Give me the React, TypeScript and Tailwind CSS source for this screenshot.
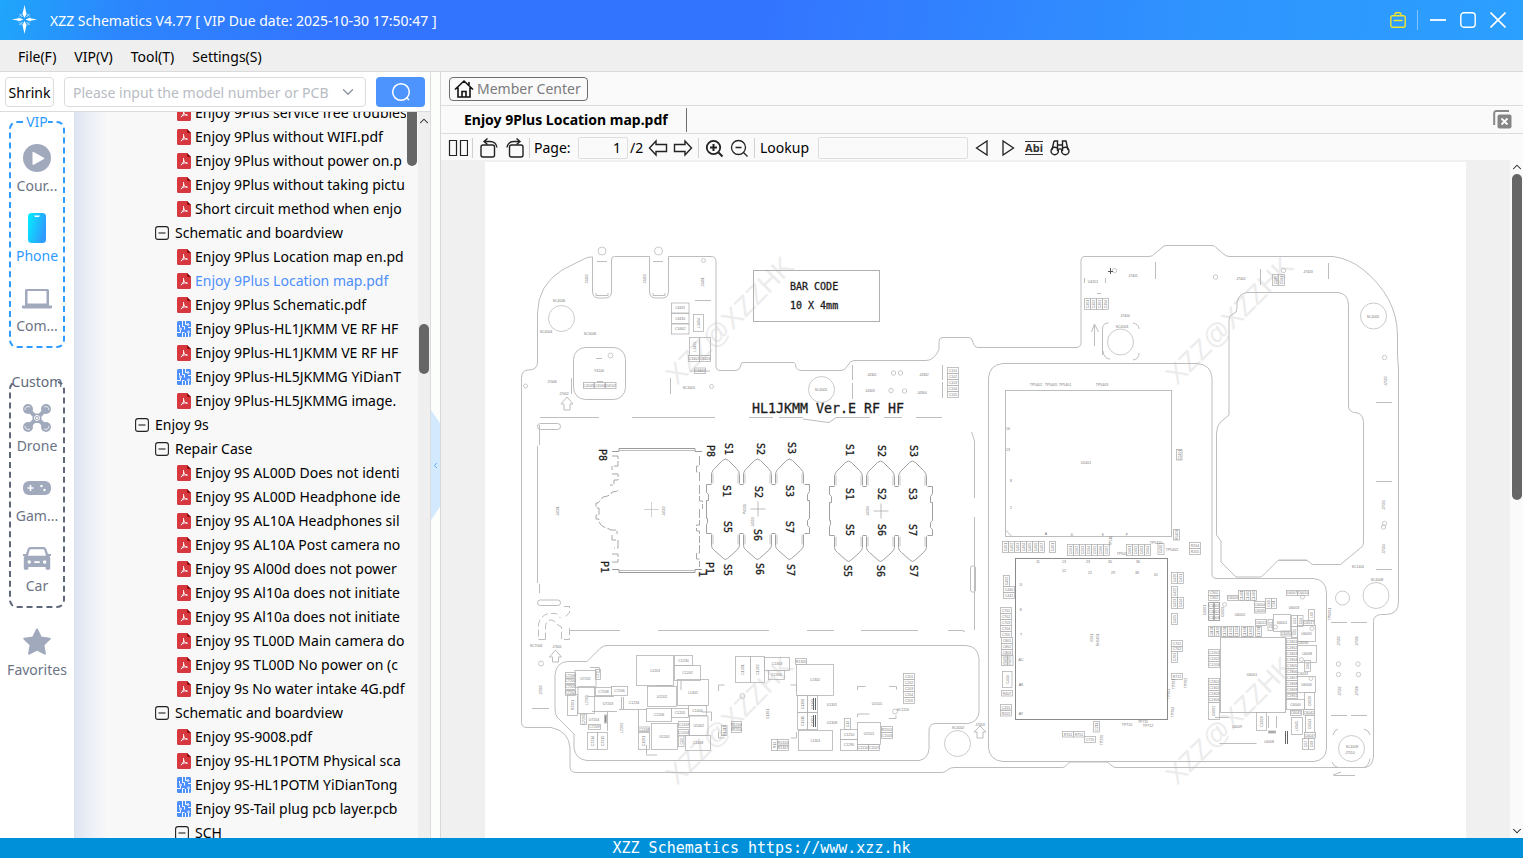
import type { ReactNode } from 'react';
import { ChevronDown, ChevronLeft, ChevronUp } from 'lucide-react';

type TreeKind = 'pdf' | 'pcb' | 'folder1' | 'folder2' | 'folder3';

interface TreeItem {
  kind: TreeKind;
  name: string;
  active?: boolean;
}

const tree: TreeItem[] = [
  { kind: 'pdf', name: 'Enjoy 9Plus service free troubles' },
  { kind: 'pdf', name: 'Enjoy 9Plus without WIFI.pdf' },
  { kind: 'pdf', name: 'Enjoy 9Plus without power on.p' },
  { kind: 'pdf', name: 'Enjoy 9Plus without taking pictu' },
  { kind: 'pdf', name: 'Short circuit method when enjo' },
  { kind: 'folder2', name: 'Schematic and boardview' },
  { kind: 'pdf', name: 'Enjoy 9Plus Location map en.pd' },
  { kind: 'pdf', name: 'Enjoy 9Plus Location map.pdf', active: true },
  { kind: 'pdf', name: 'Enjoy 9Plus Schematic.pdf' },
  { kind: 'pcb', name: 'Enjoy 9Plus-HL1JKMM VE RF HF' },
  { kind: 'pdf', name: 'Enjoy 9Plus-HL1JKMM VE RF HF' },
  { kind: 'pcb', name: 'Enjoy 9Plus-HL5JKMMG YiDianT' },
  { kind: 'pdf', name: 'Enjoy 9Plus-HL5JKMMG image.' },
  { kind: 'folder1', name: 'Enjoy 9s' },
  { kind: 'folder2', name: 'Repair Case' },
  { kind: 'pdf', name: 'Enjoy 9S AL00D Does not identi' },
  { kind: 'pdf', name: 'Enjoy 9S AL00D Headphone ide' },
  { kind: 'pdf', name: 'Enjoy 9S AL10A Headphones sil' },
  { kind: 'pdf', name: 'Enjoy 9S AL10A Post camera no' },
  { kind: 'pdf', name: 'Enjoy 9S Al00d does not power' },
  { kind: 'pdf', name: 'Enjoy 9S Al10a does not initiate' },
  { kind: 'pdf', name: 'Enjoy 9S Al10a does not initiate' },
  { kind: 'pdf', name: 'Enjoy 9S TL00D Main camera do' },
  { kind: 'pdf', name: 'Enjoy 9S TL00D No power on (c' },
  { kind: 'pdf', name: 'Enjoy 9s No water intake 4G.pdf' },
  { kind: 'folder2', name: 'Schematic and boardview' },
  { kind: 'pdf', name: 'Enjoy 9S-9008.pdf' },
  { kind: 'pdf', name: 'Enjoy 9S-HL1POTM Physical sca' },
  { kind: 'pcb', name: 'Enjoy 9S-HL1POTM YiDianTong' },
  { kind: 'pcb', name: 'Enjoy 9S-Tail plug pcb layer.pcb' },
  { kind: 'folder3', name: 'SCH' },
];

const indent: Record<TreeKind, string> = {
  pdf: 'pl-[103px] gap-1',
  pcb: 'pl-[103px] gap-1',
  folder1: 'pl-[61px] gap-1.5',
  folder2: 'pl-[81px] gap-1.5',
  folder3: 'pl-[101px] gap-1.5',
};

const PdfIcon = () => (
  <svg width="14" height="16" viewBox="0 0 14 16" className="shrink-0">
    <path d="M1.500 0H10l4 4v10.500a1.500 1.500 0 0 1-1.500 1.500h-11A1.500 1.500 0 0 1 0 14.500v-13A1.500 1.500 0 0 1 1.500 0Z" fill="#d7373f" />
    <path d="M10 0l4 4h-3.200A.8.8 0 0 1 10 3.200Z" fill="#8f0d12" />
    <path d="M6.600 5.500c.7 2.500-.5 4.700-2.400 6.500M6.800 7.500c.7 1.600 1.800 2.500 3.400 2.800M5 10.700c1.600-.8 3.200-1 5-.7" fill="none" stroke="#fff" strokeWidth="1" strokeLinecap="round" />
  </svg>
);

const PcbIcon = () => (
  <svg width="14" height="16" viewBox="0 0 14 16" className="shrink-0">
    <rect width="14" height="16" rx="1.500" fill="#4d8ffb" />
    <g fill="none" stroke="#fff" strokeWidth="1">
      <path d="M5.500 0v5.500h2v3M8.500 0v3.500h1.500M0 11.500h3.500V9M5.500 16v-4.500h2M8.500 16v-4M11.500 16v-4M14 6.500h-3M2.500 4v2.500" />
      <circle cx="11" cy="3.500" r=".9" />
      <circle cx="3.500" cy="8" r=".9" />
      <circle cx="11.500" cy="11" r=".9" />
    </g>
  </svg>
);

const CollapseIcon = () => (
  <svg width="14" height="14" viewBox="0 0 14 14" className="shrink-0" fill="none" stroke="#222" strokeWidth="1.100">
    <rect x=".6" y=".6" width="12.800" height="12.800" rx="2.400" />
    <path d="M3.500 7h7" />
  </svg>
);

function TreeRow({ item }: { item: TreeItem }) {
  const isFolder = item.kind.startsWith('folder');
  return (
    <li>
      <button className={`flex h-6 w-full items-center whitespace-nowrap text-left ${indent[item.kind]} ${item.active ? 'text-[#4d8ffb]' : 'text-black'}`}>
        {isFolder ? <CollapseIcon /> : item.kind === 'pdf' ? <PdfIcon /> : <PcbIcon />}
        <span>{item.name}</span>
      </button>
    </li>
  );
}

/* ---------- left category bar ---------- */

const PlayIcon = () => (
  <svg width="28" height="28" viewBox="0 0 28 28">
    <circle cx="14" cy="14" r="14" fill="#a1a9bd" />
    <path d="M9.500 8.500v11.500a.8.8 0 0 0 1.200.7l10.200-5.600a.8.8 0 0 0 0-1.400L10.700 7.900a.8.8 0 0 0-1.200.6Z" fill="#fff" />
  </svg>
);

const PhoneIcon = () => (
  <svg width="18" height="30" viewBox="0 0 18 30">
    <defs>
      <linearGradient id="phoneGrad" x1="0" y1="0" x2="1" y2="0.400">
        <stop offset="0%" stopColor="#02efff" />
        <stop offset="100%" stopColor="#2f9bfd" />
      </linearGradient>
    </defs>
    <rect width="18" height="30" rx="3.500" fill="url(#phoneGrad)" />
    <path d="M6 2.500h6l-1 1.500H7Z" fill="#fff" />
  </svg>
);

const ComputerIcon = () => (
  <svg width="30" height="21" viewBox="0 0 30 21">
    <path d="M4.500 1h21A1.500 1.500 0 0 1 27 2.500V18H3V2.500A1.500 1.500 0 0 1 4.500 1Z" fill="#a1a9bd" />
    <rect x="5.500" y="3" width="19" height="12.500" fill="#fff" />
    <path d="M0 17.500h30v1.700a1.300 1.300 0 0 1-1.300 1.300H1.300A1.300 1.300 0 0 1 0 19.200Z" fill="#a1a9bd" />
  </svg>
);

const DroneIcon = () => (
  <svg width="28" height="28" viewBox="0 0 28 28">
    <g fill="#a1a9bd">
      <circle cx="5" cy="5" r="5" />
      <circle cx="23" cy="5" r="5" />
      <circle cx="5" cy="23" r="5" />
      <circle cx="23" cy="23" r="5" />
      <path d="M4.500 7.500 7.500 4.500 12 9.500h4l4.500-5 3 3L18.500 12.500v3l5 5-3 3L16 19h-4l-4.500 4.500-3-3 5-5v-3Z" />
    </g>
    <g fill="none" stroke="#fff">
      <circle cx="14" cy="14" r="2.500" />
      <path d="M2 6a3.300 3.300 0 0 1 5-3M26 6a3.300 3.300 0 0 0-5-3M2 22a3.300 3.300 0 0 0 5 3M26 22a3.300 3.300 0 0 1-5 3" strokeWidth=".8" />
    </g>
    <circle cx="14" cy="14" r="1" fill="#fff" />
  </svg>
);

const GameIcon = () => (
  <svg width="28" height="14" viewBox="0 0 28 14">
    <rect width="28" height="14" rx="6" fill="#a1a9bd" />
    <path d="M4.500 7h6M7.500 4v6" stroke="#fff" strokeWidth="1.600" />
    <circle cx="18.500" cy="5" r="1.200" fill="#fff" />
    <circle cx="21.500" cy="9" r="1.200" fill="#fff" />
  </svg>
);

const CarIcon = () => (
  <svg width="28" height="23" viewBox="0 0 28 23">
    <path d="M7.500 0h13a3 3 0 0 1 2.900 2.200L25 7h3v2h-1.500l.7 1.500V21.500a1.300 1.300 0 0 1-1.300 1.300h-2a1.300 1.300 0 0 1-1.300-1.300V20H5.400v1.500a1.300 1.300 0 0 1-1.300 1.300h-2A1.300 1.300 0 0 1 .8 21.500V10.500L1.500 9H0V7h3l1.600-4.800A3 3 0 0 1 7.500 0Z" fill="#a1a9bd" />
    <path d="M8 2.300h12a1.500 1.500 0 0 1 1.400 1L23 8.700H5l1.600-5.400A1.500 1.500 0 0 1 8 2.300Z" fill="#fff" />
    <circle cx="6.300" cy="15" r="1.700" fill="#fff" />
    <circle cx="21.700" cy="15" r="1.700" fill="#fff" />
    <rect x="11" y="14.200" width="6" height="1.700" rx=".8" fill="#fff" />
  </svg>
);

const StarIcon = () => (
  <svg width="28" height="28" viewBox="0 0 28 28">
    <path d="M14 1.500l4 8.100 8.700 1.200-6.300 6.100 1.500 8.800L14 21.500l-7.900 4.200 1.500-8.800L1.300 10.800 10 9.600Z" fill="#a1a9bd" stroke="#a1a9bd" strokeWidth="2" strokeLinejoin="round" />
  </svg>
);

function NavItem({ icon, label, active }: { icon: ReactNode; label: string; active?: boolean }) {
  return (
    <button className={`flex w-full flex-col items-center gap-0.5 pt-1.5 pb-2.5 leading-5 ${active ? 'text-[#2e9bff]' : 'text-[#6b7385]'}`}>
      <span className="flex h-8 items-center">{icon}</span>
      <span>{label}</span>
    </button>
  );
}

/* ---------- board drawing ---------- */

// x, y, width, height, label, vertical label
type Part = [number, number, number, number, string?, boolean?];

const parts: Part[] = [
  [671.5, 303, 17.5, 10, 'L3431'],
  [671.5, 313.5, 17.5, 10, 'L3430'],
  [671.5, 324, 17.5, 10, 'C3462'],
  [693.5, 314.5, 10, 17, 'L3404', true],
  [689.5, 337.5, 10, 18, 'L3405', true],
  [699.5, 337.5, 11, 18],
  [688.5, 355.5, 11, 6, 'C3402'],
  [699.5, 355.5, 11, 6, 'C3403'],
  [694.5, 368, 11, 5.5, 'C3401'],
  [583.5, 382.5, 10.500, 6, 'C4105'],
  [594.5, 382.5, 10.500, 6, 'C4104'],
  [605.5, 382.5, 10.500, 6, 'D4102'],
  // bottom left shield
  [565.5, 672.5, 10, 5.5, 'C7208'],
  [565.5, 678.5, 10, 5, 'C7204'],
  [565.5, 684.5, 10, 5, 'C7207'],
  [565.5, 690.5, 10, 5, 'C7202'],
  [575, 670.5, 21, 17, 'U7201'],
  [578, 686.500, 16.500, 27, 'L7201', true],
  [595.5, 669.5, 5, 10, 'C72', true],
  [595.5, 687.5, 16, 8, 'C7208'],
  [611.5, 686.5, 16, 9, 'C7206'],
  [567.5, 694.5, 10, 21, 'R7201', true],
  [580.5, 714, 6, 10.5, 'C7205', true],
  [588.5, 724.500, 12, 5, 'C7209'],
  [587.5, 732.5, 10, 17, 'C7214', true],
  [597.5, 732.5, 10, 17, 'C7215', true],
  [636.5, 655.5, 37, 30, 'L1203'],
  [674.5, 655.5, 18, 10, 'C1230'],
  [674.5, 665.5, 26, 15, 'C1202'],
  [677.5, 679.5, 31, 26, 'L1401'],
  [647.5, 686.5, 29, 20, 'U1202'],
  [646.5, 708.5, 25, 13, 'C1206'],
  [671.5, 708.5, 17, 9, 'C1205'],
  [688.5, 705.5, 18, 10, 'C1404'],
  [689.5, 716, 18.5, 19.5, 'U1402'],
  [651.5, 723.5, 26, 26, 'U1201'],
  [638.5, 727, 11, 4.500, 'C1208'],
  [638.5, 732.5, 11, 17, 'C1201', true],
  [678.5, 721.5, 11, 6, 'C1209'],
  [678.5, 729.5, 10.500, 6, 'C1204'],
  [678.5, 736, 5.5, 10.500, 'C12', true],
  [685.5, 735.5, 25, 15, 'C1408'],
  [721.5, 725.5, 5.5, 10, 'R1210', true],
  [731.5, 721.5, 10, 5.5, 'R1206'],
  [731.5, 727.5, 10, 5, 'R1204'],
  [735.5, 656.5, 15, 26, 'C1301', true],
  [750.5, 656.5, 14, 26, 'C1302', true],
  [764.5, 657.5, 25, 13, 'C1303'],
  [768.5, 670.5, 16, 9, 'C1304'],
  [795.5, 658.5, 11, 6, 'R1305'],
  [796.5, 664.5, 37, 31, 'L1302'],
  [797.5, 695.5, 10, 17, 'C1308', true],
  [807.5, 695.5, 10, 17, 'C1309', true],
  [797.5, 712.5, 10, 17, 'C1311', true],
  [807.5, 712.5, 10, 17, 'C1307', true],
  [798.5, 730.5, 34, 20, 'L1301'],
  [771.5, 739.5, 6, 11, 'R13', true],
  [777.5, 739.5, 11, 5.5, 'R1320'],
  [777.5, 745.5, 11, 5, 'R1307'],
  [840.5, 729.5, 17, 10, 'C1250'],
  [840.5, 739.5, 17, 11, 'C1290'],
  [844.5, 718.5, 6, 11, 'C12', true],
  [857.5, 722.5, 23, 22, 'U1501'],
  [857.5, 744.5, 11, 6, 'C1510'],
  [868.5, 744.5, 11, 6, 'C1507'],
  [881.5, 726.5, 11, 6, 'R1501'],
  [881.5, 732.5, 11, 6, 'C1503'],
  // parts round the big chips
  [1176.500, 449.500, 5.500, 10.500, 'C5401', true],
  [1173.500, 529.500, 6, 10.500, 'R5401', true],
  [1049.5, 541.5, 6, 11, 'C401', true],
  [1158, 543.5, 6, 11, 'C430', true],
  [1189.5, 542.5, 11, 6, 'R204'],
  [1189.5, 548.5, 11, 6, 'R205'],
  [1003.5, 575.5, 6, 11, 'C402', true],
  [1003.5, 586.5, 11, 6, 'C440'],
  [1003.5, 592.5, 11, 6, 'C441'],
  [1001.5, 655, 6, 10.500, 'R421', true],
  [1007, 655, 6, 10.500, 'R422', true],
  [1002.500, 671.500, 9.500, 16, 'C434', true],
  [1001.5, 690.5, 11, 5.5, 'R407'],
  [1000.5, 704.5, 11, 5.5, 'C201'],
  [1000.5, 710.5, 11, 5.5, 'R202'],
  [1171.5, 572.5, 6, 11, 'C420', true],
  [1177.5, 572.5, 6, 11, 'C421', true],
  [1171.5, 586.5, 6, 11, 'C422', true],
  [1171.5, 597.5, 6, 11, 'C423', true],
  [1177.5, 597.5, 6, 11, 'C424', true],
  [1171.5, 613.5, 6, 11, 'C425', true],
  [1171.5, 640.5, 11, 6, 'C701'],
  [1171.5, 646.5, 11, 5, 'C702'],
  [1171.5, 651.5, 6, 11, 'C703', true],
  [1171.5, 673.5, 11, 6, 'R712'],
  [1093.5, 721.5, 6, 10.500, 'C711', true],
  [1062.5, 731.5, 11, 5.5, 'R701'],
  [1073.5, 731.5, 11, 5.5, 'R751'],
  [1084.5, 736.5, 11, 6, 'C715'],
  [1272.5, 274.5, 5.5, 11, 'C580', true],
  [1278.5, 274.5, 6, 11, 'C581', true],
  // right cluster
  [1227.5, 595.5, 11, 5, 'C6003'],
  [1254.5, 601.5, 11, 6, 'C6004'],
  [1254.5, 607.5, 11, 5.5, 'C6005'],
  [1265.5, 598.5, 6, 10, 'C60', true],
  [1271.5, 598.5, 5, 10, 'C61', true],
  [1286.5, 590.5, 11, 5, 'L6007'],
  [1297.5, 590.5, 11, 5, 'C6010'],
  [1255.5, 619.5, 11, 6, 'C6012'],
  [1268, 619.5, 4.500, 11, 'C62', true],
  [1273.5, 614.5, 17, 17, 'D6001'],
  [1291.5, 615.5, 6, 11, 'C63', true],
  [1297.5, 615.5, 5.5, 11, 'C64', true],
  [1303.5, 620.5, 11, 5, 'C6017'],
  [1308.5, 609.5, 6, 11, 'L60', true],
  [1291.5, 626.5, 6, 11, 'C65', true],
  [1297.5, 625.5, 18, 16, 'U6005'],
  [1297.5, 645.5, 19, 17, 'L6008'],
  [1297.5, 676.5, 18, 16, 'U6006'],
  [1304.5, 660.5, 6, 11, 'C66', true],
  [1304.5, 692.5, 10, 17, 'C6020', true],
  [1286.5, 699.5, 18, 10, 'C6040'],
  [1290.5, 710.5, 11, 5, 'C6041'],
  [1303.5, 709.5, 11, 5.5, 'C6042'],
  [1305.5, 715.5, 9, 17, 'C6043', true],
  [1291.5, 717.5, 11, 17, 'L6045', true],
  [1256.5, 712.5, 10, 18, 'C6029', true],
  [1304.5, 732.5, 11, 5.5, 'C6047'],
  [1302.5, 738.5, 6, 11, 'C67', true],
  [1308.5, 738.5, 6, 11, 'C68', true],
  [1208.5, 702.5, 11, 17, 'C6002', true],
  [1281, 631, 11, 5, 'C6050'],
];

// runs of equal parts: x, y, width, height, count, direction
type Run = [number, number, number, number, number, 'row' | 'col'];

const runs: Run[] = [
  [947.5, 367.5, 11, 6, 5, 'col'],
  [903.5, 673.5, 11, 6, 5, 'col'],
  [1084.5, 298.5, 6, 11, 4, 'row'],
  [1002.5, 541.5, 6, 11, 7, 'row'],
  [1067.5, 544.5, 6, 11, 7, 'row'],
  [1126.5, 544.5, 6, 11, 4, 'row'],
  [1000.5, 607.5, 11, 6, 5, 'col'],
  [1001.5, 637.5, 11, 6, 3, 'col'],
  [1208.5, 590.5, 11, 5, 2, 'col'],
  [1208.5, 602.5, 11, 6, 3, 'col'],
  [1208.5, 626.5, 6, 10, 2, 'row'],
  [1208.5, 649.500, 11, 6, 3, 'col'],
  [1208.5, 678.500, 11, 6, 4, 'col'],
  [1238.5, 590.5, 6, 10, 3, 'row'],
  [1221.500, 626.5, 6, 10, 3, 'row'],
  [1241.500, 626.5, 6, 10, 2, 'row'],
  [1255.500, 626.5, 6, 10, 1, 'row'],
  [1286.5, 638.5, 11, 6, 9, 'col'],
  [1286.5, 693.500, 11, 5, 1, 'col'],
];

const circles: [number, number, number][] = [
  [561.5, 318.5, 13], [821.5, 389.5, 13], [957.5, 743.5, 13], [1120.5, 342, 13], [1373.5, 316, 13],
  [1376, 595.5, 13], [1351.5, 748.5, 13], [1342.5, 598, 7], [602, 251, 4], [658.5, 251, 4],
  [703.5, 260.5, 2], [525.5, 386, 2], [610.5, 355.5, 2.5], [711.5, 386.5, 2], [893.5, 373, 2.200],
  [900.5, 373, 2.200], [891, 390.500, 2.200], [904.5, 391, 2.200], [541, 663.500, 2.500], [742.5, 696, 2.500],
  [895, 711.500, 2.500], [1114.5, 270.500, 2.200], [1215.5, 277, 2.200], [1283.500, 270.500, 2.200], [1384.500, 357.500, 2.200],
  [1384.500, 523.500, 2.200], [1383.500, 527, 2.200], [1338.5, 664, 2.200], [1358, 664, 2.200], [1338.5, 674.500, 2.200],
  [1358.500, 674.500, 2.200], [1224.500, 604.500, 2], [1302.500, 597, 2], [1275.500, 627, 2], [1312, 628.500, 2],
  [1301.500, 659.500, 2], [1311, 678.500, 2],
];

// loose reference names: x, y, text, vertical
const labels: [number, number, string, boolean?][] = [
  [559, 301, 'SC4006'], [546, 332, 'SC4004'], [590, 334, 'SC3006'], [587, 279, 'J3402', true], [645, 279, 'J3403', true],
  [703, 282, 'J3401', true], [599, 371, 'Y4100'], [552, 382, 'J7006'], [564, 394, 'J7002'], [689, 388, 'SC3401'],
  [821, 390, 'SC4001'], [872, 375, 'J4301'], [924, 375, 'J4302'], [870, 391, 'J4303'], [922, 393, 'J4304'],
  [558, 511, 'J4501', true], [664, 511, 'J4502', true], [745, 509, 'P4501', true], [753, 522, 'J4503', true], [868, 511, 'J4504', true],
  [536, 646, 'SC7004'], [557, 647, 'J7001'], [541, 690, 'J7005', true], [594, 720, 'U7204'], [608, 704, 'U7203'],
  [622, 728, 'L7203', true], [634, 703, 'C1234'], [768, 714, 'U1301', true], [832, 705, 'U1301'], [832, 723, 'U1308'],
  [877, 704, 'U1501'], [903, 710, 'SC1201'], [958, 728, 'SC4002'], [980, 725, 'J7003'], [1086, 463, 'U5401'],
  [1036, 385, 'TP5402'], [1051, 385, 'TP5405'], [1065, 385, 'TP5401'], [1102, 385, 'TP5403'], [1093, 282, 'U4201'],
  [1133, 276, 'J7401'], [1241, 279, 'J7402'], [1308, 272, 'J7403'], [1125, 316, 'J7404'], [1122, 327, 'SC4003'],
  [1373, 317, 'SC4005'], [1386, 381, 'J7502', true], [1384, 505, 'J7503', true], [1384, 549, 'J7504', true], [1358, 567, 'SC1401'],
  [1377, 580, 'SC4008'], [1352, 747, 'SC4009'], [1350, 753, 'J7510'], [1339, 641, 'J7505', true], [1357, 641, 'J7506', true],
  [1340, 691, 'J7507', true], [1357, 691, 'J7508', true], [1330, 614, 'TP6001', true], [1092, 638, 'U501', true], [1098, 640, 'SH0401', true],
  [1240, 615, 'U6002'], [1252, 675, 'U6001'], [1294, 608, 'U6003'], [1237, 727, 'L6009'], [1269, 742, 'L6008'],
  [1156, 543, 'TP5410'], [1172, 550, 'TP5402'], [1122, 554, 'TP501'], [1111, 541, 'TP511', true], [1174, 684, 'TP701', true],
  [1186, 683, 'TP702', true], [1169, 694, 'TP703', true], [1173, 712, 'TP704', true], [1127, 725, 'TP710'], [1143, 722, 'TP711'],
  [1148, 726, 'TP712'], [1102, 740, 'TP720', true], [1303, 643, 'C6030'], [1303, 674, 'C6031'],
  [1205, 610, 'C6001', true], [1223, 612, 'C6009', true], [1046, 534, 'A'], [1072, 535, 'D'], [1103, 535, 'K'],
  [1127, 535, 'P'], [1008, 429, '16'], [1008, 450, '13'], [1011, 481, '8'], [1011, 508, '2'],
  [1038, 562, '11'], [1064, 562, '13'], [1088, 562, '23'], [1110, 562, '30'], [1138, 562, '36'],
  [1064, 571, '12'], [1090, 573, '22'], [1113, 573, '29'], [1137, 573, '38'], [1156, 575, '41'],
  [1021, 585, 'D'], [1021, 610, 'K'], [1021, 635, 'T'], [1021, 660, 'AC'], [1021, 685, 'AK'], [1021, 714, 'AY'],
];

const silkscreen: [number, number, string][] = [
  [599, 455, 'P8'], [707, 451, 'P8'], [601, 567, 'P1'], [706, 568, 'P1'], [699, 574, '1'],
  [725, 449, 'S1'], [757, 449, 'S2'], [788, 448, 'S3'], [723, 491, 'S1'], [755, 492, 'S2'], [786, 491, 'S3'],
  [724, 527, 'S5'], [754, 535, 'S6'], [786, 527, 'S7'], [724, 570, 'S5'], [756, 569, 'S6'], [787, 570, 'S7'],
  [846, 450, 'S1'], [878, 451, 'S2'], [910, 451, 'S3'], [846, 494, 'S1'], [878, 494, 'S2'], [909, 494, 'S3'],
  [846, 530, 'S5'], [878, 530, 'S6'], [909, 530, 'S7'], [844, 571, 'S5'], [877, 571, 'S6'], [910, 571, 'S7'],
];

const watermarks = [[729, 320], [1229, 320], [729, 720], [1229, 720]];

function PartBox({ part }: { part: Part }) {
  const [x, y, w, h, label, vertical] = part;
  const cx = x + w / 2;
  const cy = y + h / 2;
  return (
    <g>
      <rect x={x} y={y} width={w} height={h} fill="none" stroke="#b4b4b4" strokeWidth=".8" />
      {label && (
        <text x={cx} y={cy + 1.3} textAnchor="middle" transform={vertical ? `rotate(-90 ${cx} ${cy})` : undefined}>
          {label}
        </text>
      )}
    </g>
  );
}

// one spring contact group: three pointed pads with stepped outer edges
function ContactGroup({ x, y }: { x: number; y: number }) {
  return (
    <g transform={`translate(${x} ${y})`}>
      {[0, 32, 64].map((dx) => (
        <g key={dx}>
          <path d={`M${dx + 5} 25V15q1-3 3-5l8-8q3-3 6 0l8 8q3 3 3 6v9`} />
          <path d={`M${dx + 5} 76v11q0 3 3 5l9 8q2 2 4 0l9-8q3-3 3-5V76`} />
          <path d={`M${dx + 6.500} 76v10M${dx + 31.500} 76v10M${dx + 6.500} 15v10M${dx + 31.500} 15v10`} strokeWidth=".6" />
        </g>
      ))}
      <path d="M5 26H0v8l2 2v6h-2v18h1v4l-1 2v9h5M98 26h5v7l-2 3v6h2v18l-2 2v5l2 2v6h-5M33 26h4M65 26h4M33 75h4M65 75h4" />
      <path d="M44 50.500h15M51.500 43v15" strokeWidth=".7" />
    </g>
  );
}

function BoardDrawing() {
  return (
    <svg viewBox="485 162 981 676" className="block w-full bg-white">
      <g fontFamily="'Liberation Sans', Arial, sans-serif" fontSize="27" fill="#ececed">
        {watermarks.map(([x, y]) => (
          <text key={`${x}-${y}`} x={x} y={y + 10} textAnchor="middle" transform={`rotate(-45 ${x} ${y})`}>XZZ@XZZHK</text>
        ))}
      </g>

      <g fill="none" stroke="#bdbdbd" strokeWidth="1">
        {/* board edge */}
        <path d="M521.500 378q0-8 7-8q9 0 9-8V313Q538 285 562 270L585 258.500q4-2 7.500-1.500V291q0 7 6 7h7q6 0 6-7V260q0-3.500 3-3.500H649.500V291q0 7 6 7h7q6 0 6-7V256.500H711q5 0 5 5V366q0 4.500 4 4.500h15q5 0 6-6q0-2 2-2h51q2 1 2 5q2 3 5 3h40q4 0 6-4q3-6 7-6H926q8 0 13-11v-8q0-4 4-4h26q3 0 4 5q1 5 6 5h97q5 0 5-5V261q0-4.500 4-4.500h64q4 0 6-3l7-6q2-2 4-2h46q3 0 4 2l7 6q3 3 6 3h104q16 2 30 13Q1397 297 1397.500 335V355l1 15V602q0 12-12 12.500h-6q-7 1-7 7V756q-1 11-9 11.500H1116q-2 0-3-1l-4-3q-1-1.500-3-1.500h-35q-2 0-3 1.500l-3 3q-1 1-3 1H954q-3 0-6 2q-3 3-6 3H576q-6 0-6-6V748q-1-17-19-20.500H527q-5.500 0-5.500-5Z" />
        {/* shields */}
        <path d="M555 675q1-13 13-13.500h19l13-13q3-3 7-3H966q12 1 13 13V712q-1 10-11 11.500H936q-7 0-7 7V749q-1 10-10 11.500H587q-11-1-13-12V734L557 717q-2-3-2-8Z" />
        <path d="M988.500 378q1-13 14-14.500H1197q14 1 15 14.500V574q0 4.500 5 4.500h96q13 1 13.500 14V749q-1 11-12.500 12.500H1003q-13-1-14.500-13.500Z" />
        <path d="M1248 292.500h90q10 1 10.500 12V407q1 5 6 5.500q8 0 9 9V543q0 3-3 5l-20 16.500h-28l-6-4.500h-28l-15 15q-2 2-4 2H1236l-15-15V541l-4.500-6V434q0-8 4-12l8.500-7V320q0-5 4-6q4-1 4-6v-6q2-9 11-9.500Z" />
        <rect x="573.5" y="347.5" width="52" height="52" rx="12" />
        <rect x="1005.5" y="390.5" width="166" height="146" />
        <rect x="1220.5" y="637.5" width="65" height="75" />
        <rect x="753.5" y="270.5" width="126" height="51" stroke="#b0b0b0" />
        <rect x="1015.5" y="558.5" width="152" height="161" stroke="#8a8a8a" />
        {circles.map(([cx, cy, r]) => (
          <circle key={`${cx}-${cy}`} cx={cx} cy={cy} r={r} strokeWidth=".8" />
        ))}
        {/* slot feet, short marks */}
        <path d="M596 293v2.500h12V293M653 293v2.500h12V293M597 261.500h10M653 261.500h10M695 300.500h16M596 358.500h6M597 381.500h6M571.500 378v16M670.500 378v16M852.500 365v15M852.500 383v16M942.500 365v15M942.500 382v16M690 371h20" />
        {/* inner partition of the left half */}
        <path d="M540 417.500h59M632 417.500h83M749 417.500h24M779 417.500h24M803 419l18 2.500l8 1l7-5h34M884 417.500h18M916 417.500h26M971.500 432q3 8 3 10v56M974.500 517v105M539.500 425v20M537.500 446v137M539.500 584v9M570 630.500h50M658 630.500h111M807 630.500h27M861 630.500h57M948 630.500h14l3 1M974.500 622v8" />
        <rect x="537.5" y="423.500" width="23" height="6" rx="3" />
        <rect x="537.5" y="600" width="23" height="5.500" rx="2.700" />
        <rect x="970.500" y="566" width="5" height="26" rx="2" />
        <path d="M545.500 639.500h-7V625q1-9 10-11.500h8l4 4.500M545.500 639.500V626q1-6 6-6q4 1 5 4l5 3v12.500h8V628M564 606.500h5.500v6l-6 6" strokeDasharray="7 3" />
        {/* arrows */}
        <path d="M567 397l-6 7h3v6h6v-6h3ZM555.500 650l-6 7h3v5h6v-5h3ZM980 726l-6 6h3v6h6v-6h3ZM1094.500 346V324M1094.500 324l-3 8M1094.500 324l4 8M1334 775.500h21M1333 775l8-3" />
        {/* connector */}
        <path d="M619 448.500h76v3h7M619 448.500v3h-7M619 572.500h76v-3h7M619 572.500v-3h-7" stroke="#9a9a9a" />
        <path d="M619 450.500h76M619 570.500h76" />
        <path d="M612 456h6v10h-6v4M612 474h6v6h-4v5h-4M618 490q0 2-6 2q-1 4-9 5q-4 5-5 6h-2v5h3v7h-3v4h3v3q2 5 8 6l4 2h6v4M612 535v5h6v8h-4M612 554h6v8h-6M699.500 456v10h-3v6h3v10M699.500 485v16h3v8M699.500 509v16h-3v6h3v12M699.500 545v8h-3v6h3v8" stroke="#a8a8a8" strokeDasharray="9 2" />
        <path d="M644 509.500h15M651.500 502v15" strokeWidth=".7" />
        <g stroke="#a0a0a0">
          <ContactGroup x={706.5} y={458.5} />
          <ContactGroup x={829.5} y={460.5} />
        </g>
        {/* marks on the upper right */}
        <path d="M1084.500 278v5M1105.500 278v5M1155.500 262v17M1260.500 269v16M1328.500 263v16M1376 402.500h16M1376 481.500h16M1097 293.500h4M1102.500 355V329q0-6 6-6M1103 351q1 8 7 8M1133 323q6 1 6 6M1139 353q0 6-6 7M1376 569.500h16M1331 622.500h16M1351 622.500h16M1331 715.500h16M1351 715.500h16M1279 560.500h28M1333 735q1-5 5-6M1364 729q5 1 6 6M1332 762q2 5 6 5.500h26q5-2 6-9M1005.500 530l6 6" />
        <path d="M1108 271.500h5M1110.500 268v6" stroke="#555" />
        {/* chip corner brackets */}
        <path d="M718.500 691v-6h6M718.500 732v6h6M796.500 691v-6h-6M796.500 732v6h-6M857.500 690v-3.500h8M889 686.500h7.500v3M857.500 717v-3h12M889 718.500h7v-3M590 667.500h9.500v5M588 696.500h26M592 711.500h25M621.500 697v12M623.500 697v12M607.500 711v20M638.500 710v17M619 709.500h28M646 755h11M646.500 745v9M657 685.500h14M681 681v9M702 712h9.500v9M532 708.500h17M1219.500 743.500h37M1276.500 716v12M1268.500 716v12M1215 717.500h14" />
        <path d="M813.500 698v12M815.500 698v12M813.500 715v12M815.500 715v12M1285.500 731v13M1287.500 731v13" stroke="#666" />
        <rect x="604.500" y="715" width="2" height="8" fill="#888" />
        <rect x="1268.500" y="731" width="7" height="2" fill="#999" />
        <path d="M1208.500 602.500h11v18h-11ZM1214 602.500v18" stroke="#777" />
      </g>

      <g fontFamily="'Liberation Sans', Arial, sans-serif" fontSize="3.500" fill="#777">
        {parts.map((p, i) => <PartBox key={i} part={p} />)}
        {runs.flatMap(([x, y, w, h, count, dir], r) =>
          Array.from({ length: count }, (_, i) => (
            <PartBox
              key={`${r}-${i}`}
              part={[dir === 'row' ? x + i * w : x, dir === 'col' ? y + i * h : y, w, h, `C${r + 1}0${i + 1}`, dir === 'row']}
            />
          ))
        )}
        {labels.map(([x, y, text, vertical]) => (
          <text key={`${x}-${y}`} x={x} y={y + 1} textAnchor="middle" transform={vertical ? `rotate(-90 ${x} ${y})` : undefined}>{text}</text>
        ))}
      </g>

      <g fontFamily="'DejaVu Sans Mono', monospace" fill="#1c1c1c" stroke="#1c1c1c" strokeWidth=".3">
        <g fontSize="10">
          <text x="790" y="290">BAR CODE</text>
          <text x="790" y="309">10 X 4mm</text>
          {silkscreen.map(([x, y, text]) => (
            <text key={`${x}-${y}`} x={x} y={y} textAnchor="middle" transform={`rotate(90 ${x} ${y})`}>{text}</text>
          ))}
        </g>
        <text x="752" y="413" fontSize="13.300">HL1JKMM Ver.E RF HF</text>
      </g>
    </svg>
  );
}

/* ---------- toolbar ---------- */

function ToolButton({ label, children }: { label: string; children: ReactNode }) {
  return (
    <button aria-label={label} className="flex h-6 w-5 shrink-0 items-center justify-center">
      <svg width="20" height="20" viewBox="0 0 20 20" fill="none" stroke="#222" strokeWidth="1.400">{children}</svg>
    </button>
  );
}

const Separator = () => <span className="h-5 w-px shrink-0 bg-[#d0d0d0]" />;

function Toolbar() {
  return (
    <div className="flex h-[26px] shrink-0 items-center pt-px pl-[7px] text-black">
      <ToolButton label="Two pages">
        <path d="M1.500 2.500h7v15h-7ZM12.500 2.500h7v15h-7Z" strokeWidth="1.200" />
      </ToolButton>
      <div className="ml-1 flex items-center gap-1.5">
        <Separator />
        <ToolButton label="Rotate left">
          <rect x="2" y="7" width="13.500" height="12" rx="2" />
          <path d="M5 3.500h6q6 0 7 6M8.500.5 5 3.500 8.500 6.500" />
        </ToolButton>
        <ToolButton label="Rotate right">
          <rect x="4.500" y="7" width="13.500" height="12" rx="2" />
          <path d="M15 3.500H9q-6 0-7 6M11.500.5 15 3.500 11.500 6.500" />
        </ToolButton>
      </div>
      <label htmlFor="page" className="ml-1 w-[49px] border-l border-[#d0d0d0] pl-1">Page:</label>
      <input id="page" defaultValue="1" className="h-[22px] w-[50px] rounded-xs border border-[#dedede] bg-[#fafafa] pr-1.5 text-right" />
      <span className="ml-0.5 w-[18px]">/2</span>
      <div className="flex items-center gap-[5px]">
        <ToolButton label="Previous page"><path d="M1.500 10 8 3v3.500h10.500v7H8V17Z" /></ToolButton>
        <ToolButton label="Next page"><path d="M18.500 10 12 3v3.500H1.500v7H12V17Z" /></ToolButton>
        <Separator />
        <ToolButton label="Zoom in"><circle cx="9.500" cy="9.500" r="6.700" strokeWidth="1.800" /><path d="M14.500 14.500l4 4M6 9.500h7M9.500 6v7" strokeWidth="2" /></ToolButton>
        <ToolButton label="Zoom out"><circle cx="9.500" cy="9.500" r="7" strokeWidth="1.300" /><path d="M14.500 14.500l4 4M6.500 9.500h6" strokeWidth="1.300" /></ToolButton>
        <Separator />
      </div>
      <label htmlFor="lookup" className="ml-[5px] w-[58px]">Lookup</label>
      <input id="lookup" className="h-[22px] w-[150px] rounded-xs border border-[#dedede] bg-[#fafafa] px-1.5" />
      <div className="ml-1 flex items-center gap-1.5">
        <ToolButton label="Find previous"><path d="M15 3v14L4.500 10Z" strokeWidth="1.300" /></ToolButton>
        <ToolButton label="Find next"><path d="M5 3v14l10.500-7Z" strokeWidth="1.300" /></ToolButton>
        <button className="flex w-5 shrink-0 flex-col items-center text-[11px] leading-3 font-bold text-[#333]">
          <span className="border-y border-[#333]">Abi</span>
        </button>
        <ToolButton label="Whole word">
          <path d="M4 3h3.500v4h5V3H16l2 9M4 3 2 12M7.500 7v6M12.500 7v6" />
          <circle cx="4.700" cy="13" r="3.700" />
          <circle cx="15.300" cy="13" r="3.700" />
          <path d="M8.500 11h3" />
        </ToolButton>
      </div>
    </div>
  );
}

function TitleBar() {
  return (
    <header className="flex h-10 shrink-0 items-center bg-[linear-gradient(100deg,#1fa6fb_0%,#2c86fd_8%,#3374ff_22%,#3374ff_50%,#2f93fe_78%,#2ba0ff_100%)] pr-[17px] pl-3 text-white">
      <svg width="25" height="30" viewBox="0 0 25 30" fill="#fff">
        <path d="M12.500 0 14.500 9 12.500 13 10.500 9ZM12.500 29l2-9-2-4-2 4ZM0 14.500 8 13l3.500 1.500L8 16ZM25 14.500 17 13l-3.500 1.500L17 16Z" />
        <path d="M7.500 9l3 3M17.500 9l-3 3M7.500 20l3-3M17.500 20l-3-3" stroke="#fff" strokeWidth="1" opacity=".8" />
        <circle cx="12.500" cy="14.500" r="6" fill="none" stroke="#fff" opacity=".3" />
      </svg>
      <h1 className="ml-[13px] flex-1 pt-0.5 whitespace-nowrap">XZZ Schematics V4.77 [ VIP Due date: 2025-10-30 17:50:47 ]</h1>
      <button aria-label="Toolbox" className="text-[#efe52c]">
        <svg width="16" height="16" viewBox="0 0 16 16" fill="none" stroke="currentColor" strokeWidth="1.400">
          <rect x=".8" y="3.800" width="14.400" height="11.400" rx="1.800" />
          <path d="M5 3.500V2.200A1.400 1.400 0 0 1 6.400.8h3.200A1.400 1.400 0 0 1 11 2.200v1.300M3.500 8.500h9" />
        </svg>
      </button>
      <span className="mr-3 ml-[11px] h-5 w-px bg-white/40" />
      <div className="flex items-center gap-3.5">
        <button aria-label="Minimize">
          <svg width="16" height="16" viewBox="0 0 16 16" fill="none" stroke="#fff" strokeWidth="1.800"><path d="M0 8h16" /></svg>
        </button>
        <button aria-label="Maximize">
          <svg width="16" height="16" viewBox="0 0 16 16" fill="none" stroke="#fff" strokeWidth="1.400"><rect x=".8" y=".8" width="14.400" height="14.400" rx="3" /></svg>
        </button>
        <button aria-label="Close">
          <svg width="16" height="16" viewBox="0 0 16 16" fill="none" stroke="#fff" strokeWidth="1.600"><path d="M.5.5l15 15M15.500.5l-15 15" /></svg>
        </button>
      </div>
    </header>
  );
}

function SidePanel() {
  return (
    <aside className="flex w-[431px] shrink-0 flex-col border-r border-[#dcdcdc] bg-white">
      <div className="flex h-10 shrink-0 items-center border-b border-[#dcdcdc] px-[5px] pt-px">
        <button className="h-[30px] w-[49px] shrink-0 rounded border border-[#dcdcdc] pt-px text-black">
          <span className="-mx-1">Shrink</span>
        </button>
        <div className="ml-2.5 flex h-[30px] min-w-0 flex-1 items-center rounded border border-[#dcdcdc] pr-2 pl-2">
          <input aria-label="Model number" placeholder="Please input the model number or PCB" className="min-w-0 flex-1 pt-px outline-none placeholder:text-[#b8bcc4]" />
          <button aria-label="Open list"><ChevronDown size={18} color="#8f959f" strokeWidth={1.8} /></button>
        </div>
        <button aria-label="Search" className="ml-2.5 flex h-[30px] w-[49px] shrink-0 items-center justify-center rounded-sm bg-[#4d94ff]">
          <svg width="20" height="20" viewBox="0 0 20 20" fill="none" stroke="#fff" strokeWidth="1.500"><circle cx="10" cy="10" r="8.300" /><path d="M15.500 15.500l2.500 2.500" /></svg>
        </button>
      </div>
      <div className="flex min-h-0 flex-1">
        <nav className="flex w-[74px] shrink-0 flex-col items-center">
          <fieldset className="w-14 min-w-0 rounded-lg border-2 border-dashed border-[#2e9bff] pt-1">
            <legend className="mx-auto leading-5 text-[#2e9bff]">VIP</legend>
            <NavItem icon={<PlayIcon />} label="Cour..." />
            <NavItem icon={<PhoneIcon />} label="Phone" active />
            <NavItem icon={<ComputerIcon />} label="Com..." />
          </fieldset>
          <fieldset className="mt-6 w-14 min-w-0 rounded-lg border-2 border-dashed border-[#5f687b] pt-1">
            <legend className="mx-auto leading-5 text-[#5f687b]"><span className="-mx-1">Custom</span></legend>
            <NavItem icon={<DroneIcon />} label="Drone" />
            <NavItem icon={<GameIcon />} label="Gam..." />
            <NavItem icon={<CarIcon />} label="Car" />
          </fieldset>
          <div className="mt-3"><NavItem icon={<StarIcon />} label="Favorites" /></div>
        </nav>
        <div className="flex min-w-0 flex-1 bg-[linear-gradient(90deg,#dbe3f1_0px,#e9edf5_12px,#f8f8f8_34px)]">
          <div className="min-w-0 flex-1 overflow-hidden">
            <ul className="-mt-[11px]">
              {tree.map((item, i) => <TreeRow key={i} item={item} />)}
            </ul>
          </div>
          <div className="w-3 pl-px"><div className="h-[54px] w-2.5 rounded-b-full bg-[#666]" /></div>
          <div className="flex w-3 flex-col items-center bg-[#efefef] pt-0.5">
            <ChevronUp size={14} color="#222" strokeWidth={1.8} className="shrink-0" />
            <div className="mt-[196px] h-[50px] w-2.5 rounded-full bg-[#666]" />
          </div>
        </div>
      </div>
    </aside>
  );
}

export default function App() {
  return (
    <div className="flex h-screen flex-col overflow-hidden bg-[#fafafa] font-['Noto_Sans','Open_Sans',sans-serif] text-sm">
      <TitleBar />
      <nav className="flex h-8 shrink-0 items-center gap-[18px] border-b border-[#dadada] bg-[#efefef] px-[18px] pt-0.5 text-black">
        <button>File(F)</button>
        <button>VIP(V)</button>
        <button>Tool(T)</button>
        <button>Settings(S)</button>
      </nav>
      <div className="flex min-h-0 flex-1">
        <SidePanel />
        <div className="flex w-[9px] shrink-0 flex-col justify-center bg-[#fcfefb]">
          <button aria-label="Hide panel" className="mt-5 flex h-[110px] items-center justify-center bg-[#d3e9fd] text-[#3c9df5] [clip-path:polygon(0_0,100%_12%,100%_88%,0_100%)]">
            <ChevronLeft size={9} />
          </button>
        </div>
        <main className="flex min-w-0 flex-1 flex-col border-l border-[#d8d8d8]">
          <div className="flex h-[34px] shrink-0 items-center border-b border-[#dcdcdc] pl-2">
            <a href="#member" className="flex h-6 items-center gap-[3px] rounded-sm border border-[#6e6e6e] pr-1.5 pl-1 text-[#7b7b7b]">
              <svg width="20" height="20" viewBox="0 0 20 20" fill="none" stroke="#111" strokeWidth="1.600">
                <path d="M1 10.500 10 2l9 8.500M4 8.500V18h12V8.500M8 18v-5.500h4V18M15 3v3" />
              </svg>
              Member Center
            </a>
          </div>
          <div className="flex h-7 shrink-0 items-center justify-between border-b border-[#dcdcdc] pr-[11px]">
            <div className="flex h-6 items-center border-r border-[#6e6e6e] pr-[18px] pl-[23px] font-bold text-black">Enjoy 9Plus Location map.pdf</div>
            <button aria-label="Close all tabs">
              <svg width="19" height="19" viewBox="0 0 19 19">
                <path d="M1.200 15V3a2 2 0 0 1 2-2H16" fill="none" stroke="#888" strokeWidth="2" />
                <rect x="4.500" y="4.500" width="14" height="14" rx="2" fill="#858585" />
                <path d="M8.500 8.500l6 6M14.500 8.500l-6 6" stroke="#fff" strokeWidth="1.800" />
              </svg>
            </button>
          </div>
          <Toolbar />
          <div className="flex min-h-0 flex-1 bg-[#f0f0f0]">
            <div className="min-w-0 flex-1 overflow-hidden px-11 pt-0.5">
              <BoardDrawing />
            </div>
            <div className="flex w-[13px] shrink-0 flex-col items-center bg-[#fafafa]">
              <ChevronUp size={14} color="#222" strokeWidth={1.8} className="shrink-0" />
              <div className="h-[326px] w-2.5 shrink-0 rounded-full bg-[#666]" />
              <ChevronDown size={14} color="#222" strokeWidth={1.8} className="mt-auto shrink-0" />
            </div>
          </div>
        </main>
      </div>
      <footer className="h-5 shrink-0 bg-[#0090da] text-center font-['DejaVu_Sans_Mono','Liberation_Mono',monospace] text-[15px] leading-5 text-white">
        XZZ Schematics https://www.xzz.hk
      </footer>
    </div>
  );
}
